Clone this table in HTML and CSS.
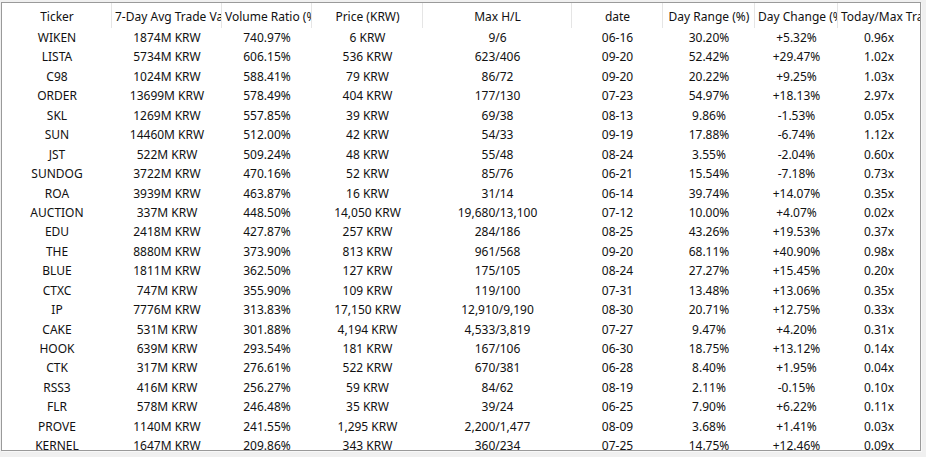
FILE: index.html
```html
<!DOCTYPE html>
<html>
<head>
<meta charset="utf-8">
<link rel="stylesheet" href="styles.css">
</head>
<body>
<div class="frame">
  <div class="row head">
    <div class="cell">Ticker</div>
    <div class="cell">7-Day Avg Trade Value (KRW)</div>
    <div class="cell">Volume Ratio (%)</div>
    <div class="cell">Price (KRW)</div>
    <div class="cell">Max H/L</div>
    <div class="cell">date</div>
    <div class="cell">Day Range (%)</div>
    <div class="cell">Day Change (%)</div>
    <div class="cell">Today/Max Trade Ratio</div>
  </div>
  <div class="body" id="rows">
    <div class="row"><div class="cell">WIKEN</div><div class="cell">1874M KRW</div><div class="cell">740.97%</div><div class="cell">6 KRW</div><div class="cell">9/6</div><div class="cell">06-16</div><div class="cell">30.20%</div><div class="cell">+5.32%</div><div class="cell">0.96x</div></div>
    <div class="row"><div class="cell">LISTA</div><div class="cell">5734M KRW</div><div class="cell">606.15%</div><div class="cell">536 KRW</div><div class="cell">623/406</div><div class="cell">09-20</div><div class="cell">52.42%</div><div class="cell">+29.47%</div><div class="cell">1.02x</div></div>
    <div class="row"><div class="cell">C98</div><div class="cell">1024M KRW</div><div class="cell">588.41%</div><div class="cell">79 KRW</div><div class="cell">86/72</div><div class="cell">09-20</div><div class="cell">20.22%</div><div class="cell">+9.25%</div><div class="cell">1.03x</div></div>
    <div class="row"><div class="cell">ORDER</div><div class="cell">13699M KRW</div><div class="cell">578.49%</div><div class="cell">404 KRW</div><div class="cell">177/130</div><div class="cell">07-23</div><div class="cell">54.97%</div><div class="cell">+18.13%</div><div class="cell">2.97x</div></div>
    <div class="row"><div class="cell">SKL</div><div class="cell">1269M KRW</div><div class="cell">557.85%</div><div class="cell">39 KRW</div><div class="cell">69/38</div><div class="cell">08-13</div><div class="cell">9.86%</div><div class="cell">-1.53%</div><div class="cell">0.05x</div></div>
    <div class="row"><div class="cell">SUN</div><div class="cell">14460M KRW</div><div class="cell">512.00%</div><div class="cell">42 KRW</div><div class="cell">54/33</div><div class="cell">09-19</div><div class="cell">17.88%</div><div class="cell">-6.74%</div><div class="cell">1.12x</div></div>
    <div class="row"><div class="cell">JST</div><div class="cell">522M KRW</div><div class="cell">509.24%</div><div class="cell">48 KRW</div><div class="cell">55/48</div><div class="cell">08-24</div><div class="cell">3.55%</div><div class="cell">-2.04%</div><div class="cell">0.60x</div></div>
    <div class="row"><div class="cell">SUNDOG</div><div class="cell">3722M KRW</div><div class="cell">470.16%</div><div class="cell">52 KRW</div><div class="cell">85/76</div><div class="cell">06-21</div><div class="cell">15.54%</div><div class="cell">-7.18%</div><div class="cell">0.73x</div></div>
    <div class="row"><div class="cell">ROA</div><div class="cell">3939M KRW</div><div class="cell">463.87%</div><div class="cell">16 KRW</div><div class="cell">31/14</div><div class="cell">06-14</div><div class="cell">39.74%</div><div class="cell">+14.07%</div><div class="cell">0.35x</div></div>
    <div class="row"><div class="cell">AUCTION</div><div class="cell">337M KRW</div><div class="cell">448.50%</div><div class="cell">14,050 KRW</div><div class="cell">19,680/13,100</div><div class="cell">07-12</div><div class="cell">10.00%</div><div class="cell">+4.07%</div><div class="cell">0.02x</div></div>
    <div class="row"><div class="cell">EDU</div><div class="cell">2418M KRW</div><div class="cell">427.87%</div><div class="cell">257 KRW</div><div class="cell">284/186</div><div class="cell">08-25</div><div class="cell">43.26%</div><div class="cell">+19.53%</div><div class="cell">0.37x</div></div>
    <div class="row"><div class="cell">THE</div><div class="cell">8880M KRW</div><div class="cell">373.90%</div><div class="cell">813 KRW</div><div class="cell">961/568</div><div class="cell">09-20</div><div class="cell">68.11%</div><div class="cell">+40.90%</div><div class="cell">0.98x</div></div>
    <div class="row"><div class="cell">BLUE</div><div class="cell">1811M KRW</div><div class="cell">362.50%</div><div class="cell">127 KRW</div><div class="cell">175/105</div><div class="cell">08-24</div><div class="cell">27.27%</div><div class="cell">+15.45%</div><div class="cell">0.20x</div></div>
    <div class="row"><div class="cell">CTXC</div><div class="cell">747M KRW</div><div class="cell">355.90%</div><div class="cell">109 KRW</div><div class="cell">119/100</div><div class="cell">07-31</div><div class="cell">13.48%</div><div class="cell">+13.06%</div><div class="cell">0.35x</div></div>
    <div class="row"><div class="cell">IP</div><div class="cell">7776M KRW</div><div class="cell">313.83%</div><div class="cell">17,150 KRW</div><div class="cell">12,910/9,190</div><div class="cell">08-30</div><div class="cell">20.71%</div><div class="cell">+12.75%</div><div class="cell">0.33x</div></div>
    <div class="row"><div class="cell">CAKE</div><div class="cell">531M KRW</div><div class="cell">301.88%</div><div class="cell">4,194 KRW</div><div class="cell">4,533/3,819</div><div class="cell">07-27</div><div class="cell">9.47%</div><div class="cell">+4.20%</div><div class="cell">0.31x</div></div>
    <div class="row"><div class="cell">HOOK</div><div class="cell">639M KRW</div><div class="cell">293.54%</div><div class="cell">181 KRW</div><div class="cell">167/106</div><div class="cell">06-30</div><div class="cell">18.75%</div><div class="cell">+13.12%</div><div class="cell">0.14x</div></div>
    <div class="row"><div class="cell">CTK</div><div class="cell">317M KRW</div><div class="cell">276.61%</div><div class="cell">522 KRW</div><div class="cell">670/381</div><div class="cell">06-28</div><div class="cell">8.40%</div><div class="cell">+1.95%</div><div class="cell">0.04x</div></div>
    <div class="row"><div class="cell">RSS3</div><div class="cell">416M KRW</div><div class="cell">256.27%</div><div class="cell">59 KRW</div><div class="cell">84/62</div><div class="cell">08-19</div><div class="cell">2.11%</div><div class="cell">-0.15%</div><div class="cell">0.10x</div></div>
    <div class="row"><div class="cell">FLR</div><div class="cell">578M KRW</div><div class="cell">246.48%</div><div class="cell">35 KRW</div><div class="cell">39/24</div><div class="cell">06-25</div><div class="cell">7.90%</div><div class="cell">+6.22%</div><div class="cell">0.11x</div></div>
    <div class="row"><div class="cell">PROVE</div><div class="cell">1140M KRW</div><div class="cell">241.55%</div><div class="cell">1,295 KRW</div><div class="cell">2,200/1,477</div><div class="cell">08-09</div><div class="cell">3.68%</div><div class="cell">+1.41%</div><div class="cell">0.03x</div></div>
    <div class="row"><div class="cell">KERNEL</div><div class="cell">1647M KRW</div><div class="cell">209.86%</div><div class="cell">343 KRW</div><div class="cell">360/234</div><div class="cell">07-25</div><div class="cell">14.75%</div><div class="cell">+12.46%</div><div class="cell">0.09x</div></div>
  </div>
</div>
</body>
</html>
```
FILE: styles.css
```css
html, body {
  margin: 0;
  padding: 0;
}
body {
  background: #f0f0f0;
  width: 926px;
  height: 457px;
  overflow: hidden;
  font-family: "Noto Sans", "Open Sans", sans-serif;
  font-size: 12px;
  color: #111;
}
.frame {
  box-sizing: border-box;
  margin: 2px 0 0 1px;
  width: 920px;
  height: 449px;
  border: 1px solid #9a9a9a;
  background: #fff;
  overflow: hidden;
  box-shadow: 1px 1px 0 #f8f8f8;
}
.row {
  display: grid;
  grid-template-columns: 110px 110px 90px 111px 149px 91px 92px 83px 1fr;
  height: 19.45px;
}
.row.head {
  height: 25px;
}
.cell {
  white-space: nowrap;
  overflow: hidden;
  text-align: center;
  line-height: 19.45px;
  padding: 0 3px;
}
.head .cell {
  line-height: 25px;
  padding: 1px 2px 0 3px;
  border-right: 1px solid #e5e5e5;
  box-sizing: border-box;
  height: 25px;
}
.head .cell:last-child {
  border-right: none;
}
```
